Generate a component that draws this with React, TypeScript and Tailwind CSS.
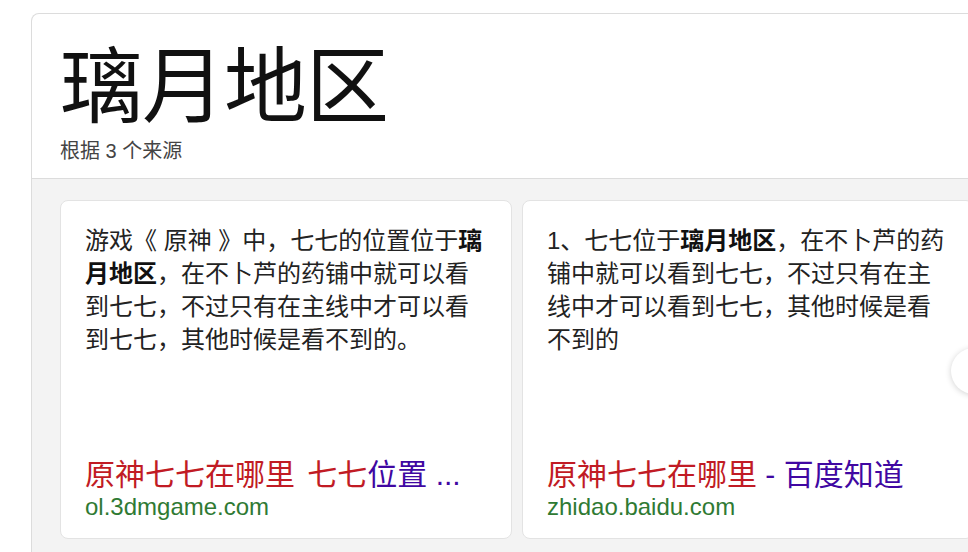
import { ChevronRight } from 'lucide-react'

const cjk = { fontFamily: '"Liberation Sans", "Noto Sans CJK SC", sans-serif' }

interface AnswerCardProps {
  body: React.ReactNode
  title: React.ReactNode
  url: string
}

function AnswerCard({ body, title, url }: AnswerCardProps) {
  return (
    <div className="flex h-[339px] w-[452px] shrink-0 flex-col justify-between rounded-lg border border-[#e3e3e3] bg-white px-6 pt-[23px] pb-[17px]">
      <p className="text-[24px] leading-[33px] text-[#222]">{body}</p>
      <div>
        <div className="whitespace-nowrap text-[30px] leading-[36px]">{title}</div>
        <div className="text-[24px] leading-[28px] text-[#2f7a33]">{url}</div>
      </div>
    </div>
  )
}

export default function App() {
  return (
    <div className="h-[552px] w-full overflow-hidden bg-white" style={cjk}>
      <div className="ml-[31px] mt-[13px] w-[1000px] rounded-t-lg border border-b-0 border-[#dcdcdc]">
        {/* Header */}
        <div className="pl-[28px] pt-[33px] pb-[13px]">
          <h1 className="text-[83px] leading-[82px] tracking-[-1px] text-[#111]">璃月地区</h1>
          <p className="mt-[8px] text-[20px] leading-[28px] text-[#444]">根据 3 个来源</p>
        </div>

        {/* Answers */}
        <div className="relative h-[400px] border-t border-[#dcdcdc] bg-[#f3f3f3] pl-[28px] pt-[21px]">
          <div className="flex gap-[10px]">
            <AnswerCard
              body={
                <>
                  游戏《 原神 》中，七七的位置位于<b className="text-[#111]">璃月地区</b>，在不卜芦的药铺中就可以看到七七，不过只有在主线中才可以看到七七，其他时候是看不到的。
                </>
              }
              title={
                <>
                  <span className="text-[#c11b24]">原神七七在哪里 </span>
                  <span className="ml-[4px] text-[#c11b24]">七七</span>
                  <span className="text-[#4007a2]">位置 ...</span>
                </>
              }
              url="ol.3dmgame.com"
            />
            <AnswerCard
              body={
                <>
                  1、七七位于<b className="text-[#111]">璃月地区</b>，在不卜芦的药铺中就可以看到七七，不过只有在主线中才可以看到七七，其他时候是看不到的
                </>
              }
              title={
                <>
                  <span className="text-[#c11b24]">原神七七在哪里</span>
                  <span className="text-[#4007a2]"> - 百度知道</span>
                </>
              }
              url="zhidao.baidu.com"
            />
          </div>

          {/* Next button */}
          <button className="absolute left-[919px] top-[169px] flex h-[46px] w-[46px] items-center justify-center rounded-full bg-white shadow-[0_1px_6px_rgba(0,0,0,0.18)]">
            <ChevronRight size={22} strokeWidth={1.5} className="text-[#999]" />
          </button>
        </div>
      </div>
    </div>
  )
}
